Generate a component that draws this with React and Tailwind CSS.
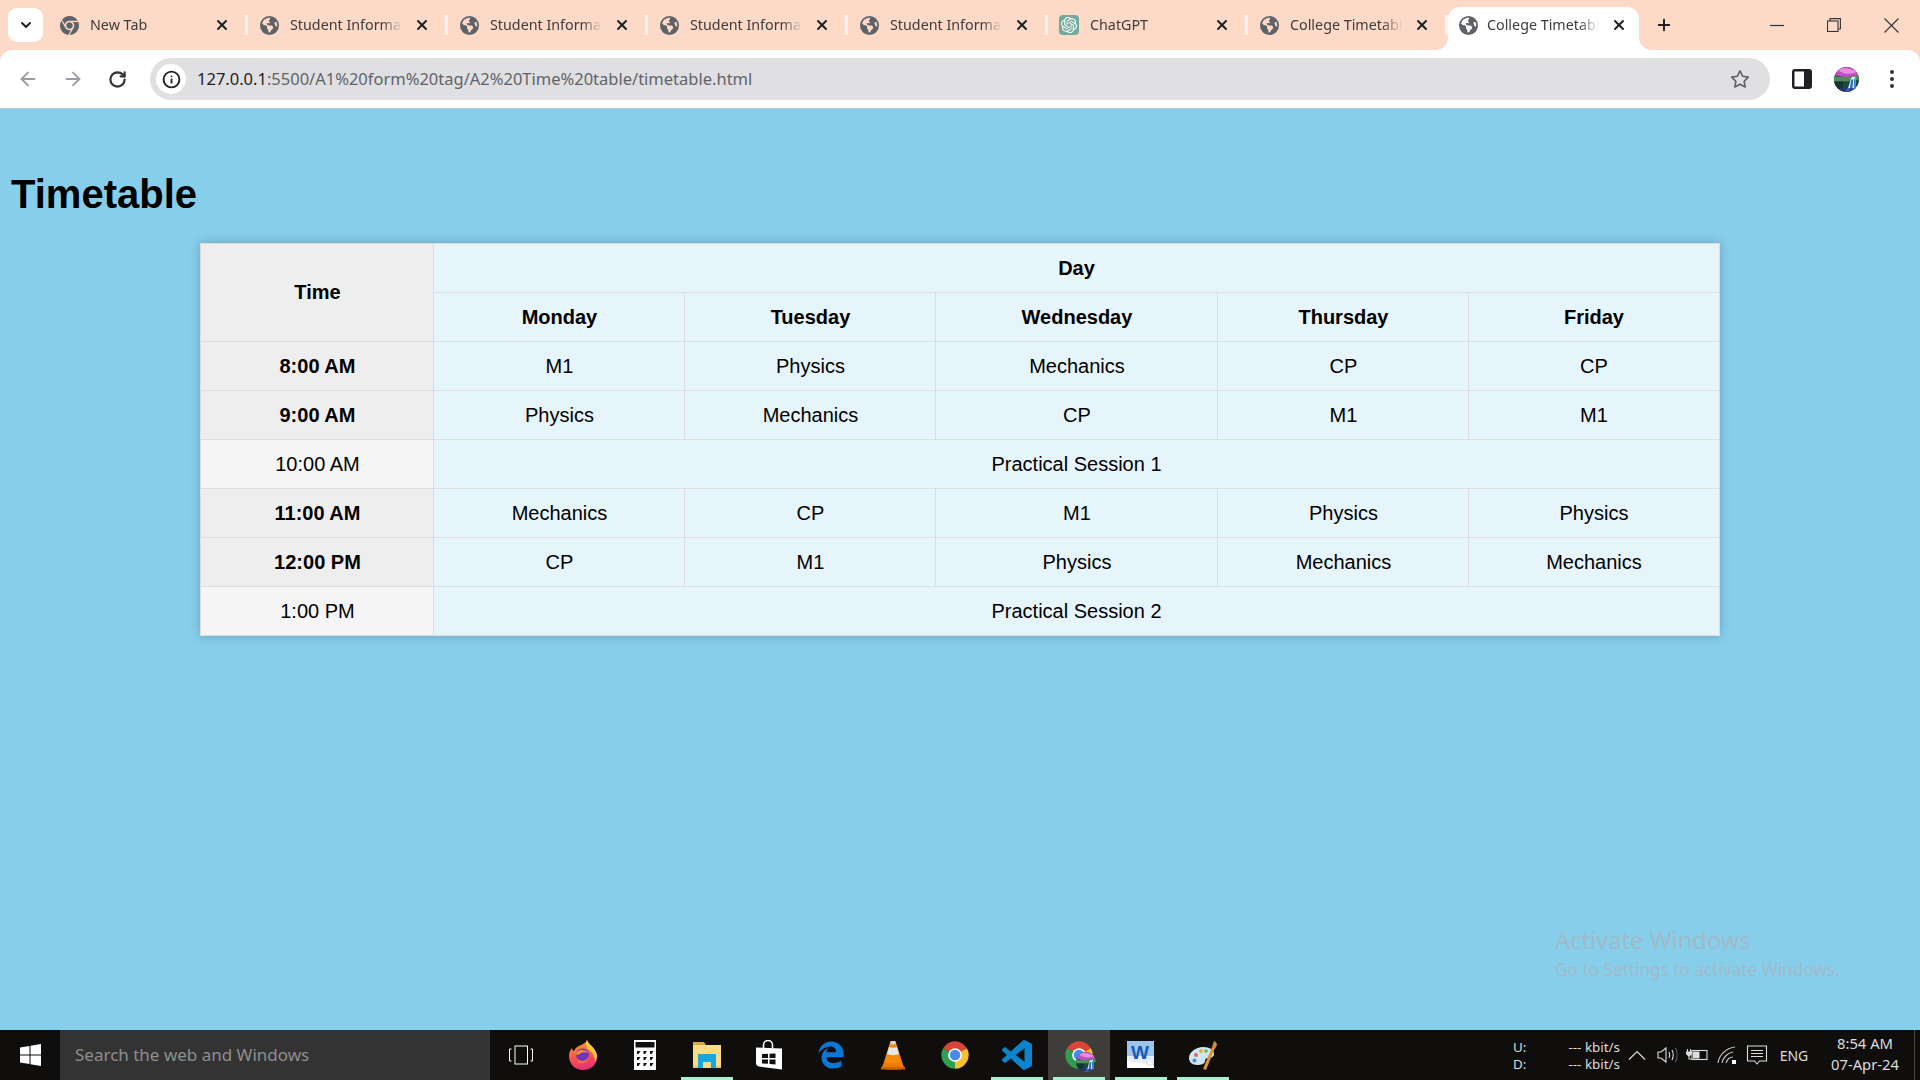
import React, { useId } from "react";
import { FaChrome, FaEarthAmericas, FaEdgeLegacy, FaRegStar } from "react-icons/fa6";
import { SiOpenai } from "react-icons/si";
import { ArrowLeft, ArrowRight, ChevronDown, Info, Plus, RotateCw, X } from "lucide-react";

const subjects = [
  { time: "8:00 AM", cells: ["M1", "Physics", "Mechanics", "CP", "CP"] },
  { time: "9:00 AM", cells: ["Physics", "Mechanics", "CP", "M1", "M1"] },
  { time: "10:00 AM", session: "Practical Session 1" },
  { time: "11:00 AM", cells: ["Mechanics", "CP", "M1", "Physics", "Physics"] },
  { time: "12:00 PM", cells: ["CP", "M1", "Physics", "Mechanics", "Mechanics"] },
  { time: "1:00 PM", session: "Practical Session 2" },
];

const days = ["Monday", "Tuesday", "Wednesday", "Thursday", "Friday"];

const tabs = [
  { title: "New Tab", icon: "chrome" },
  { title: "Student Information Form", icon: "globe" },
  { title: "Student Information Form", icon: "globe" },
  { title: "Student Information Form", icon: "globe" },
  { title: "Student Information Form", icon: "globe" },
  { title: "ChatGPT", icon: "gpt" },
  { title: "College Timetable", icon: "globe" },
];

function Favicon({ icon }) {
  if (icon === "chrome") return <FaChrome className="w-[19px] h-[19px] text-[#5f6368]" />;
  if (icon === "gpt")
    return (
      <div className="w-[20px] h-[20px] rounded-[4px] bg-[#74aa9c] flex items-center justify-center">
        <SiOpenai className="w-[16px] h-[16px] text-white" />
      </div>
    );
  return <FaEarthAmericas className="w-[19px] h-[19px] text-[#5f6368]" />;
}

function Tab({ title, icon }) {
  return (
    <div className="w-[200px] h-full flex items-center pl-[12px] shrink-0">
      <div className="w-[20px] flex justify-center">
        <Favicon icon={icon} />
      </div>
      <div className="ml-[11px] w-[112px] overflow-hidden whitespace-nowrap text-[14.3px] text-[#3c3c3c] [mask-image:linear-gradient(to_right,black_82%,transparent_100%)]">
        {title}
      </div>
      <X className="ml-[12px] w-[16px] h-[16px] text-[#222]" strokeWidth={3} />
      <div className="ml-auto mr-[-1px] w-[3px] h-[20px] bg-[#fff3ec]" />
    </div>
  );
}

function ActiveTab() {
  return (
    <div className="relative ml-px w-[191px] h-[43px] self-end flex items-center pl-[10px] pb-[7px] bg-white rounded-t-[12px] shrink-0">
      <div className="absolute bottom-0 left-[-12px] w-[12px] h-[12px] bg-[radial-gradient(circle_at_0_0,transparent_11.5px,white_12px)]" />
      <div className="absolute bottom-0 right-[-12px] w-[12px] h-[12px] bg-[radial-gradient(circle_at_100%_0,transparent_11.5px,white_12px)]" />
      <div className="w-[20px] flex justify-center">
        <FaEarthAmericas className="w-[19px] h-[19px] text-[#5f6368]" />
      </div>
      <div className="ml-[9px] w-[112px] overflow-hidden whitespace-nowrap text-[14.3px] text-[#3c3c3c] [mask-image:linear-gradient(to_right,black_82%,transparent_100%)]">
        College Timetable
      </div>
      <X className="ml-[12px] w-[16px] h-[16px] text-[#222]" strokeWidth={3} />
    </div>
  );
}

function WindowControls() {
  return (
    <div className="ml-auto flex items-center h-full text-[#333]">
      <div className="w-[56px] flex justify-center">
        <svg width="14" height="14" viewBox="0 0 14 14">
          <path d="M0 7.5h14" stroke="currentColor" strokeWidth="1.2" />
        </svg>
      </div>
      <div className="w-[57px] flex justify-center">
        <svg width="14" height="14" viewBox="0 0 14 14" fill="none" stroke="currentColor" strokeWidth="1.1">
          <rect x="0.5" y="3" width="10.5" height="10.5" />
          <path d="M3 3V0.6h10.4V11H11" />
        </svg>
      </div>
      <div className="w-[58px] flex justify-center">
        <svg width="15" height="15" viewBox="0 0 15 15" stroke="currentColor" strokeWidth="1.1">
          <path d="M0.5 0.5l14 14M14.5 0.5l-14 14" />
        </svg>
      </div>
    </div>
  );
}

function Avatar({ size }) {
  const id = useId();
  return (
    <svg width={size} height={size} viewBox="0 0 26 26">
      <clipPath id={id}>
        <circle cx="13" cy="13" r="13" />
      </clipPath>
      <g clipPath={`url(#${id})`}>
        <rect width="26" height="26" fill="#1c4a44" />
        <path d="M0 0h26v8C20 10 10 12 0 8z" fill="#c44fc4" />
        <path d="M4 3c6-3 12-2 20 2-6 3-14 3-20-2z" fill="#ea8de0" />
        <path d="M0 9c8 3 16 1 26-1v5C18 15 10 15 0 15z" fill="#4f8f5c" />
        <path d="M0 15h10l-2 11H0z" fill="#14342f" />
        <path d="M18 11l4-1 1 12-5 3-7 1 4-5z" fill="#dff0fb" />
        <path d="M16 25l2-12 2 0-1 12zM21 24l0-12 1 0 1 10z" fill="#2c6fc4" />
        <rect y="22" width="26" height="4" fill="#26338a" opacity="0.8" />
      </g>
    </svg>
  );
}

function ChromeLogo() {
  return (
    <svg width="30" height="30" viewBox="0 0 48 48">
      <path d="M24 24L5 13A22 22 0 0 1 43 13z" fill="#db4437" />
      <path d="M24 24L43 13A22 22 0 0 1 24 46z" fill="#fbc02d" />
      <path d="M24 24L24 46A22 22 0 0 1 5 13z" fill="#2f9e4f" />
      <circle cx="24" cy="24" r="11" fill="#fff" />
      <circle cx="24" cy="24" r="8.5" fill="#4a89f3" />
    </svg>
  );
}

function Firefox() {
  return (
    <svg width="30" height="32" viewBox="0 0 30 32">
      <defs>
        <linearGradient id="ffBody" x1="0.3" y1="0" x2="0.5" y2="1">
          <stop offset="0" stopColor="#ff9a2e" />
          <stop offset="0.6" stopColor="#f8504a" />
          <stop offset="1" stopColor="#e0307c" />
        </linearGradient>
      </defs>
      <path d="M19 1c1 4 8 7 10 15 1 9-6 15-14 15S1 25 1 17c0-3 1-6 3-8 0 2 1 3 2 3 1-3 4-5 7-6 2-1 5-2 6-5z" fill="url(#ffBody)" />
      <path d="M19 1c1 4 8 7 10 15 0 3-1 5-2 7 0-6-3-10-7-13-2-2-3-5-1-9z" fill="#ffc53a" />
      <circle cx="14.5" cy="16" r="6.5" fill="#6f35c0" />
      <path d="M8 16c0-3 3-5 6-5 2 0 5 1 6 3-2-1-5-1-7 0-2 1-3 2-5 2z" fill="#ff8a2a" />
      <path d="M10 20c2 2 6 3 9 0 1-1 1-2 1-3 1 5-4 8-8 7-2 0-3-2-2-4z" fill="#ff6b3b" />
    </svg>
  );
}

function Calculator() {
  return (
    <svg width="22" height="30" viewBox="0 0 22 30">
      <rect width="22" height="30" fill="#fff" />
      <rect x="1.5" y="2" width="19" height="5.5" fill="#111" />
      {[11, 17, 23].map((y) =>
        [3, 9.5, 16].map((x) => <path key={`${x}-${y}`} d={`M${x} ${y}h3.5l-2 3h-1.5z`} fill="#111" />)
      )}
    </svg>
  );
}

function Explorer() {
  return (
    <svg width="28" height="28" viewBox="0 0 28 28">
      <path d="M0 1h11l2 3h15v2H0z" fill="#d9a93a" />
      <path d="M0 4h28v23H0z" fill="#f8dc86" />
      <path d="M0 25h28v2H0z" fill="#eec565" />
      <path d="M5 13h18v14h-5v-6h-8v6H5z" fill="#19a6df" />
      <path d="M10 21h8v6h-8z" fill="#f8dc86" />
    </svg>
  );
}

function StoreBag() {
  return (
    <svg width="28" height="30" viewBox="0 0 28 30">
      <path d="M8.5 8V5a4.5 4.5 0 0 1 9 0v3" fill="none" stroke="#fff" strokeWidth="1.6" />
      <path d="M1 7.5l26 1v21L4 26.5C2 26 1 25 1 23z" fill="#fff" />
      <path d="M7 14l6-.3v4.3H7zM14.5 13.7l6-.2V18h-6zM7 19.5h6v4.3l-6-.4zM14.5 19.5h6v5l-6-.5z" fill="#111" />
    </svg>
  );
}

function Vlc() {
  return (
    <svg width="26" height="30" viewBox="0 0 26 30">
      <path d="M10.5 1h5L23 25H3z" fill="#f58a0e" />
      <path d="M9 7c2 1 6 1 8 0l2 7c-3 1.5-9 1.5-12 0z" fill="#e7e7e7" />
      <path d="M11 1h4l1 3c-1.5.6-4.5.6-6 0z" fill="#d8d8d8" />
      <path d="M5 22c4 2 12 2 16 0l4 6c0 2-24 2-24 0z" fill="#f07a00" />
      <path d="M1 27h24v2.5H1z" fill="#c96400" />
    </svg>
  );
}

function VsCode() {
  return (
    <svg width="30" height="30" viewBox="0 0 24 24">
      <path
        fill="#0a84cc"
        d="M23.15 2.587L18.21.21a1.494 1.494 0 0 0-1.705.29l-9.46 8.63-4.12-3.128a.999.999 0 0 0-1.276.057L.327 7.261A1 1 0 0 0 .326 8.74L3.899 12 .326 15.26a1 1 0 0 0 .001 1.479L1.65 17.94a.999.999 0 0 0 1.276.057l4.12-3.128 9.46 8.63a1.492 1.492 0 0 0 1.704.29l4.942-2.377A1.5 1.5 0 0 0 24 20.06V3.939a1.5 1.5 0 0 0-.85-1.352zm-5.146 14.861L10.826 12l7.178-5.448v10.896z"
      />
    </svg>
  );
}

function Word() {
  return (
    <svg width="28" height="28" viewBox="0 0 28 28">
      <rect width="27" height="27" fill="#e6f0fb" />
      <path d="M0 0h27v15H0z" fill="#9fc4ec" />
      <path d="M0 20L27 24v3H0z" fill="#fff" />
      <path d="M20 16l7 8h-7z" fill="#fff" stroke="#b8c9dc" strokeWidth="0.6" />
      <text x="13" y="18" textAnchor="middle" fontSize="19" fontWeight="700" fill="#1a58b8" fontFamily="Liberation Sans, sans-serif">
        W
      </text>
    </svg>
  );
}

function Palette() {
  return (
    <svg width="30" height="30" viewBox="0 0 30 30">
      <path d="M1 18c0-6 7-11 14-11 7 0 11 3 11 7 0 3-3 4-6 4-2 0-3 1-3 3 0 3-4 4-8 4-5 0-8-3-8-7z" fill="#cfe6f2" />
      <circle cx="8" cy="15" r="2" fill="#e5654f" />
      <circle cx="13" cy="11" r="2" fill="#e3b23c" />
      <circle cx="18" cy="11" r="1.8" fill="#6cb04f" />
      <circle cx="6.5" cy="20.5" r="2" fill="#4b8fd0" />
      <path d="M15 29l9-22 3 1-9 22z" fill="#d9953b" />
      <path d="M24 7l2-6c2 1 3 2 3 4l-2 4z" fill="#c88a4a" />
    </svg>
  );
}

function StartLogo() {
  return (
    <svg width="21" height="22" viewBox="0 0 21 22" fill="#fff">
      <path d="M0 3.5L9.5 2v8.5H0zM10.5 1.8L21 0v10.5H10.5zM0 11.5h9.5V20L0 18.5zM10.5 11.5H21V22L10.5 20.2z" />
    </svg>
  );
}

function TaskView() {
  return (
    <svg width="26" height="20" viewBox="0 0 26 20" fill="none" stroke="#fff" strokeWidth="1">
      <rect x="7" y="1" width="12.5" height="18" />
      <path d="M3.5 4H1.5v12h2M22.5 4h2v12h-2" />
    </svg>
  );
}

const taskIcons = [
  { key: "task", el: <TaskView /> },
  { key: "firefox", el: <Firefox /> },
  { key: "calc", el: <Calculator /> },
  { key: "files", el: <Explorer />, open: true },
  { key: "store", el: <StoreBag /> },
  { key: "edge", el: <FaEdgeLegacy className="w-[28px] h-[28px] text-[#0a78d4]" /> },
  { key: "vlc", el: <Vlc /> },
  { key: "chrome", el: <ChromeLogo /> },
  { key: "code", el: <VsCode />, open: true },
  {
    key: "active",
    el: (
      <div className="relative">
        <ChromeLogo />
        <div className="absolute right-[-2px] bottom-[-2px]">
          <Avatar size={20} />
        </div>
      </div>
    ),
    open: true,
    active: true,
  },
  { key: "word", el: <Word />, open: true },
  { key: "paint", el: <Palette />, open: true },
];

function TaskButton({ el, open, active }) {
  return (
    <div className={`relative w-[62px] h-full flex items-center justify-center ${active ? "bg-[#3f3d3a]" : ""}`}>
      {el}
      {open && <div className="absolute bottom-0 left-[5px] right-[5px] h-[3px] bg-[#a8f0d0]" />}
    </div>
  );
}

function SystemTray() {
  return (
    <div className="ml-auto h-full flex items-center text-[#dcdcdc] font-['Noto_Sans',sans-serif]">
      <div className="w-[107px] text-[13.4px] leading-[17px] mt-[2px] mr-[7px]">
        <div className="flex justify-between">
          <span>U:</span>
          <span>--- kbit/s</span>
        </div>
        <div className="flex justify-between">
          <span>D:</span>
          <span>--- kbit/s</span>
        </div>
      </div>
      <svg className="mr-[9px]" width="20" height="12" viewBox="0 0 20 12" fill="none" stroke="#ddd" strokeWidth="1.2">
        <path d="M2 10.5l8-8 8 8" />
      </svg>
      <svg className="mr-[8px]" width="22" height="18" viewBox="0 0 22 18" fill="none" stroke="#ddd" strokeWidth="1.1">
        <path d="M2 6h3l5-4v14l-5-4H2z" />
        <path d="M13 6c1 2 1 4 0 6M16 4c1.5 3 1.5 7 0 10" />
        <path d="M19.5 2c2 4 2 10 0 14" stroke="#666" />
      </svg>
      <svg className="mr-[9px]" width="22" height="14" viewBox="0 0 22 14" fill="none" stroke="#ddd" strokeWidth="1.1">
        <rect x="6" y="2.5" width="15" height="9" />
        <rect x="7" y="3.5" width="6.5" height="7" fill="#ddd" stroke="none" />
        <path d="M1.5 1v3M4.5 1v3M0.5 4h5v2l-2.5 2-2.5-2z" fill="#ddd" />
        <path d="M3 8v3h3" />
      </svg>
      <svg className="mr-[9px]" width="20" height="18" viewBox="0 0 20 18" fill="none" stroke="#ccc" strokeWidth="1.1">
        <path d="M1 17C2 9 9 2 18 1M5 17c1-5 5-10 11-11M9 17c1-3 3-6 7-6" />
        <rect x="15" y="14" width="4" height="4" fill="#fff" stroke="none" />
      </svg>
      <svg className="mr-[6px]" width="22" height="22" viewBox="0 0 22 22" fill="none" stroke="#ddd" strokeWidth="1.1">
        <path d="M1.5 2h19v15h-7l-2.5 3-2.5-3h-7z" />
        <path d="M5 6.5h12M5 9.5h12M5 12.5h12" />
      </svg>
      <div className="w-[40px] text-center text-[14px] mr-[11px]">ENG</div>
      <div className="w-[80px] text-center text-[14.8px] leading-[21px] mb-[2px] mr-[9px]">
        <div>8:54 AM</div>
        <div>07-Apr-24</div>
      </div>
      <div className="w-px h-full bg-[#4a4a4a] mr-[5px]" />
    </div>
  );
}

function Timetable() {
  const head = "border border-[#dddddd] bg-[#eeeeee] font-bold text-black";
  const cell = "border border-[#dddddd] bg-[#e6f4fb] text-center font-normal";
  return (
    <table className="mx-auto w-[1518px] table-fixed border-collapse text-[20px] shadow-[0_0_10px_rgba(0,0,0,0.22)]">
      <colgroup>
        <col className="w-[233px]" />
        <col className="w-[251px]" />
        <col className="w-[251px]" />
        <col className="w-[282px]" />
        <col className="w-[251px]" />
        <col className="w-[250px]" />
      </colgroup>
      <thead>
        <tr className="h-[49px]">
          <th rowSpan={2} className={`${head} pb-[2px]`}>
            Time
          </th>
          <th colSpan={5} className={`${cell} !font-bold`}>
            Day
          </th>
        </tr>
        <tr className="h-[49px]">
          {days.map((day) => (
            <th key={day} className={`${cell} !font-bold`}>
              {day}
            </th>
          ))}
        </tr>
      </thead>
      <tbody>
        {subjects.map((row) => (
          <tr key={row.time} className="h-[49px]">
            {row.session ? (
              <>
                <td className="border border-[#dddddd] bg-[#f5f5f5] text-center">{row.time}</td>
                <td colSpan={5} className={cell}>
                  {row.session}
                </td>
              </>
            ) : (
              <>
                <th className={head}>{row.time}</th>
                {row.cells.map((subject, i) => (
                  <td key={i} className={cell}>
                    {subject}
                  </td>
                ))}
              </>
            )}
          </tr>
        ))}
      </tbody>
    </table>
  );
}

export default function App() {
  return (
    <div className="h-screen flex flex-col overflow-hidden bg-[#fdd9c8] font-['Noto_Sans',sans-serif]">
      <div className="h-[50px] shrink-0 flex items-center pl-[8px]">
        <div className="w-[35px] h-[34px] mr-[4px] bg-white rounded-[9px] flex items-center justify-center shrink-0">
          <ChevronDown className="w-[16px] h-[16px] text-[#222]" strokeWidth={3} />
        </div>
        {tabs.map((tab, i) => (
          <Tab key={i} {...tab} />
        ))}
        <ActiveTab />
        <Plus className="ml-[16px] w-[18px] h-[18px] text-[#222] shrink-0" strokeWidth={2.6} />
        <WindowControls />
      </div>

      <div className="h-[59px] shrink-0 flex items-center bg-white rounded-t-[12px] border-b border-[#aed0dc]">
        <div className="w-[5px]" />
        <div className="w-[45px] flex justify-center">
          <ArrowLeft className="w-[22px] h-[22px] text-[#9a9da1]" strokeWidth={2} />
        </div>
        <div className="w-[45px] flex justify-center">
          <ArrowRight className="w-[22px] h-[22px] text-[#9a9da1]" strokeWidth={2} />
        </div>
        <div className="w-[45px] flex justify-center">
          <RotateCw className="w-[19px] h-[19px] text-[#333]" strokeWidth={2.8} />
        </div>
        <div className="ml-[10px] w-[1620px] h-[42px] rounded-full bg-[#e0e0e2] flex items-center pl-[6px] pr-[20px]">
          <div className="w-[30px] h-[30px] rounded-full bg-white flex items-center justify-center">
            <Info className="w-[19px] h-[19px] text-[#222]" strokeWidth={2.4} />
          </div>
          <div className="ml-[11px] text-[16.5px] text-[#5f6368] whitespace-nowrap">
            <span className="text-[#202124]">127.0.0.1</span>:5500/A1%20form%20tag/A2%20Time%20table/timetable.html
          </div>
          <FaRegStar className="ml-auto w-[20px] h-[20px] text-[#5f6368]" />
        </div>
        <svg className="ml-[22px]" width="20" height="20" viewBox="0 0 20 20">
          <rect width="20" height="20" rx="3" fill="#202124" />
          <rect x="2.5" y="2.5" width="9.5" height="15" fill="#fff" />
        </svg>
        <div className="ml-[22px] h-[25px]">
          <Avatar size={25} />
        </div>
        <svg className="ml-[31px]" width="4" height="18" viewBox="0 0 4 18" fill="#333">
          <circle cx="2" cy="2" r="2" />
          <circle cx="2" cy="9" r="2" />
          <circle cx="2" cy="16" r="2" />
        </svg>
      </div>

      <main className="relative flex-1 bg-[#87ceeb] px-[10px] pt-[62px] font-['Liberation_Sans',Arial,sans-serif] text-black">
        <h1 className="ml-px text-[40px] leading-[46px] font-bold mb-[26px]">Timetable</h1>
        <Timetable />
        <div className="absolute left-[1555px] top-[815px] text-[#a0bac9] font-['Noto_Sans',sans-serif] pointer-events-none">
          <div className="text-[23.7px] leading-[32px]">Activate Windows</div>
          <div className="text-[17.2px] leading-[24px] mt-[2px]">Go to Settings to activate Windows.</div>
        </div>
      </main>

      <div className="h-[50px] shrink-0 flex items-center bg-[#0f0e0d]">
        <div className="w-[60px] h-full flex items-center justify-center">
          <StartLogo />
        </div>
        <div className="w-[430px] h-full bg-[#333333] flex items-center pl-[15px] text-[17px] text-[#8f8f8f]">
          Search the web and Windows
        </div>
        {taskIcons.map(({ key, ...icon }) => (
          <TaskButton key={key} {...icon} />
        ))}
        <SystemTray />
      </div>
    </div>
  );
}
